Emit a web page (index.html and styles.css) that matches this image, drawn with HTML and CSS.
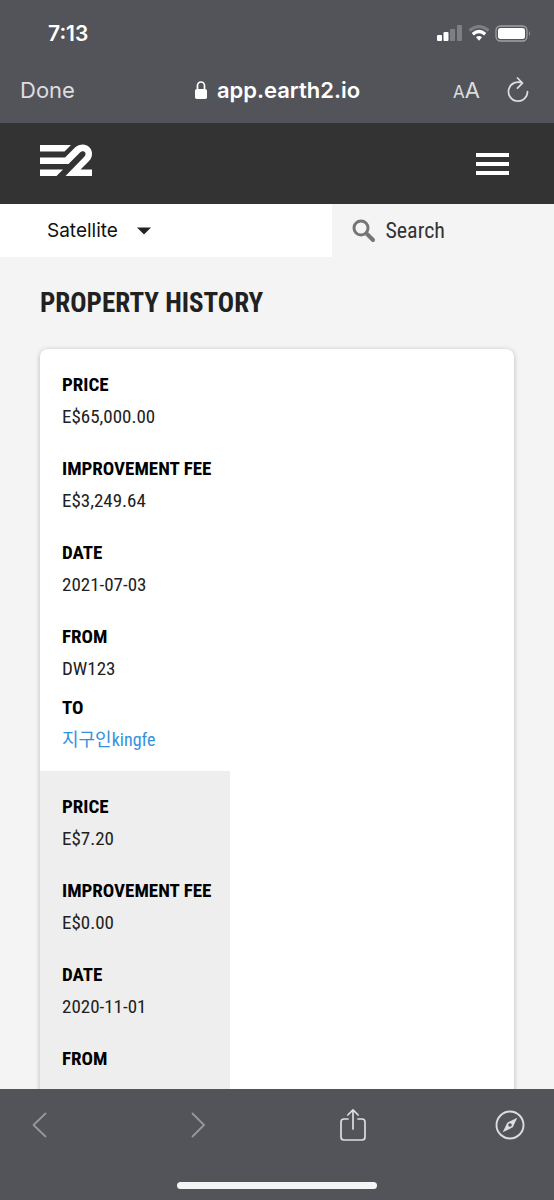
FILE: index.html
```html
<!DOCTYPE html>
<html lang="en">
<head>
<meta charset="utf-8">
<meta name="viewport" content="width=device-width, initial-scale=1">
<title>Property History</title>
<link rel="stylesheet" href="styles.css">
</head>
<body>
<div class="screen">
  <header class="chrome">
    <div class="status">
      <span class="time">7:13</span>
      <span class="indicators">
        <svg width="26" height="18" viewBox="0 0 26 18" fill="#fff" aria-hidden="true"><rect x="0" y="10" width="5" height="6" rx="1"/><rect x="6.500" y="7" width="5" height="9" rx="1"/><g opacity=".25"><rect x="13" y="4" width="5" height="12" rx="1"/><rect x="20" y="0" width="5" height="16" rx="1"/></g></svg>
        <svg width="22" height="18" viewBox="0 0 22 18" fill="none" stroke="#fff" aria-hidden="true"><path d="M1.500 5.500Q11-2.500 20.500 5.500" stroke-width="3" opacity=".25"/><path d="M4.800 9.200Q11 3.800 17.200 9.200" stroke-width="3.200"/><path d="M8 12.200Q11 10 14 12.200L11 15.800Z" fill="#fff" stroke="none"/></svg>
        <svg width="36" height="18" viewBox="0 0 36 18" aria-hidden="true"><rect x="1" y="1" width="31" height="15" rx="4.500" fill="none" stroke="#a1a1a4" stroke-width="1.300"/><rect x="3" y="3" width="27" height="11" rx="2.500" fill="#fff"/><path d="M34 6Q36 8.500 34 11Z" fill="#a1a1a4"/></svg>
      </span>
    </div>
    <div class="address">
      <button class="plain done" type="button">Done</button>
      <div class="site">
        <svg width="14" height="20" viewBox="0 0 14 20" aria-hidden="true"><rect x="1" y="9" width="12" height="10" rx="1.800" fill="#fff"/><path d="M3.500 9V5.500a3.500 3.500 0 0 1 7 0V9" fill="none" stroke="#fff" stroke-width="1.700"/></svg>
        <span>app.earth2.io</span>
      </div>
      <div class="tools">
        <button class="plain textsize" type="button" aria-label="Text size"><small>A</small>A</button>
        <button class="plain" type="button" aria-label="Reload"><svg width="22" height="26" viewBox="0 0 22 26" fill="none" stroke="#dddde0" stroke-width="1.700" stroke-linecap="round" stroke-linejoin="round"><path d="M20.500 14.500A9.500 9.500 0 1 1 15.200 6.100M10.500 1l5 5.200-5 5"/></svg></button>
      </div>
    </div>
  </header>

  <main class="page">
    <nav class="navbar">
      <a class="logo" href="#" aria-label="Earth 2"><svg width="52" height="33" viewBox="0 0 52 33" fill="#fff"><path d="M0 1H31L24.500 7.500H0ZM0 13.500H25L35.500 3Q38 .5 42.500.5C48 .5 52 4.500 52 9.500Q52 14 49 17L40.500 25.500H52V32H25.500L44.500 12.500C47.500 9 43.500 5.500 40 8.500L28.500 20H0ZM0 25.500H23L16.500 32H0Z"/></svg></a>
      <button class="plain" type="button" aria-label="Menu"><svg width="33" height="24" viewBox="0 0 33 24" fill="#fff"><path d="M0 1h33v4H0zM0 10h33v4H0zM0 19h33v4H0z"/></svg></button>
    </nav>
    <div class="filters">
      <div class="map-style">
        <select class="style-select" aria-label="Map style"><option>Satellite</option></select>
        <svg class="caret" width="14" height="8" viewBox="0 0 14 8" aria-hidden="true"><path d="M0 .5h14L7 7.500z" fill="#222"/></svg>
      </div>
      <label class="search">
        <svg width="24" height="24" viewBox="0 0 24 24" fill="none" stroke="#757575" aria-hidden="true"><circle cx="9" cy="9" r="7" stroke-width="3"/><path d="M14.500 14.500l6.500 6.500" stroke-width="4" stroke-linecap="round"/></svg>
        <input class="search-input" type="text" placeholder="Search" aria-label="Search">
      </label>
    </div>

    <section class="history">
      <h1 class="title">PROPERTY HISTORY</h1>
      <div class="card">
        <dl class="record">
          <div class="field"><dt>PRICE</dt><dd>E$65,000.00</dd></div>
          <div class="field"><dt>IMPROVEMENT FEE</dt><dd>E$3,249.64</dd></div>
          <div class="field"><dt>DATE</dt><dd>2021-07-03</dd></div>
          <div class="field from"><dt>FROM</dt><dd>DW123</dd></div>
          <div class="field to"><dt>TO</dt><dd><a class="owner" href="#">지구인kingfe</a></dd></div>
        </dl>
        <dl class="record shaded">
          <div class="field"><dt>PRICE</dt><dd>E$7.20</dd></div>
          <div class="field"><dt>IMPROVEMENT FEE</dt><dd>E$0.00</dd></div>
          <div class="field"><dt>DATE</dt><dd>2020-11-01</dd></div>
          <div class="field from"><dt>FROM</dt></div>
        </dl>
      </div>
    </section>
  </main>

  <footer class="toolbar">
    <div class="actions">
      <button class="plain action" type="button" aria-label="Back"><svg width="16" height="26" viewBox="0 0 16 26" fill="none" stroke="#97979b" stroke-width="1.800" stroke-linecap="round" stroke-linejoin="round"><path d="M13.500 1.500L1.500 13l12 11.500"/></svg></button>
      <button class="plain action" type="button" aria-label="Forward"><svg width="16" height="26" viewBox="0 0 16 26" fill="none" stroke="#97979b" stroke-width="1.800" stroke-linecap="round" stroke-linejoin="round"><path d="M3.500 1.500L15 13 3.500 24.500"/></svg></button>
      <button class="plain action" type="button" aria-label="Share"><svg width="28" height="34" viewBox="0 0 28 34" fill="none" stroke="#dddde0" stroke-width="1.700" stroke-linecap="round" stroke-linejoin="round"><path d="M9 11H5Q2 11 2 14v15q0 3 3 3h18q3 0 3-3V14q0-3-3-3h-4M14 21V2M8.800 7L14 1.800 19.200 7"/></svg></button>
      <button class="plain action" type="button" aria-label="Open in Safari"><svg width="30" height="30" viewBox="0 0 30 30"><circle cx="15" cy="15" r="13.500" fill="none" stroke="#dddde0" stroke-width="1.900"/><path fill="#dddde0" fill-rule="evenodd" d="M22.300 7.700L17.800 17.300 7.700 22.300 12.300 12.700ZM15 13.200a1.800 1.800 0 1 0 0 3.600 1.800 1.800 0 0 0 0-3.600Z"/></svg></button>
    </div>
    <div class="home-bar"></div>
  </footer>
</div>
</body>
</html>
```
FILE: styles.css
```css
* {
  box-sizing: border-box;
}

body {
  margin: 0;
  font-family: "Roboto Condensed", "Liberation Sans Narrow", Roboto, "Noto Sans CJK KR", sans-serif;
  color: #212121;
}

svg {
  display: block;
}

.plain {
  padding: 0;
  border: 0;
  background: none;
  color: #dddde0;
  font: inherit;
}

.screen {
  display: flex;
  flex-direction: column;
  height: 100vh;
  overflow: hidden;
}

.chrome {
  flex: none;
  padding-bottom: 9px;
  background: #535459;
  color: #fff;
  font-family: Inter, sans-serif;
}

.status {
  display: flex;
  align-items: center;
  justify-content: space-between;
  height: 66px;
  padding: 0 23px 0 48px;
}

.time {
  font-size: 21px;
  font-weight: 600;
}

.indicators {
  display: flex;
  gap: 5px;
  padding-top: 2px;
}

.address {
  display: grid;
  grid-template-columns: 1fr auto 1fr;
  align-items: center;
  height: 48px;
  padding: 0 20px;
}

.done {
  justify-self: start;
  font-size: 22px;
}

.site {
  display: flex;
  align-items: center;
  gap: 9px;
  font-size: 22px;
  font-weight: 600;
}

.tools {
  display: flex;
  align-items: center;
  justify-content: flex-end;
  gap: 27px;
  padding-right: 5px;
}

.textsize {
  font-size: 22px;
}

.textsize small {
  font-size: 17px;
}

.page {
  flex: 1;
  min-height: 0;
  overflow: hidden;
  background: #f4f4f4;
}

.navbar {
  display: flex;
  align-items: center;
  justify-content: space-between;
  height: 81px;
  padding: 0 45px 0 40px;
  background: #333;
}

.logo {
  padding-bottom: 6px;
}

.filters {
  display: grid;
  grid-template-columns: minmax(0, 3fr) minmax(0, 2fr);
  height: 53px;
}

.map-style {
  display: flex;
  align-items: center;
  padding-left: 47px;
  background: #fff;
}

.style-select {
  width: 104px;
  margin-right: -14px;
  padding: 0;
  border: 0;
  appearance: none;
  background: none;
  color: #111;
  font: 19px Inter, sans-serif;
}

.caret {
  pointer-events: none;
}

.search {
  display: flex;
  align-items: center;
  gap: 9px;
  padding-left: 20px;
}

.search-input {
  flex: 1;
  min-width: 0;
  padding: 0;
  border: 0;
  background: none;
  color: #333;
  font: inherit;
  font-size: 22px;
}

.search-input::placeholder {
  color: #333;
}

.history {
  padding: 30px 40px 0;
}

.title {
  margin: 0 0 30px;
  font-size: 27px;
  font-weight: 700;
  line-height: 32px;
}

.card {
  overflow: hidden;
  border-radius: 8px;
  background: #fff;
  box-shadow: 0 1px 5px rgba(0, 0, 0, 0.25);
}

.record {
  width: 190px;
  margin: 0;
  padding: 20px 0 15px 22px;
  font-size: 19px;
  line-height: 32px;
  white-space: nowrap;
}

.shaded {
  background: #eee;
}

.field {
  margin-bottom: 20px;
}

.from {
  margin-bottom: 7px;
}

.to {
  margin-bottom: 0;
}

dt {
  color: #000;
  font-weight: 700;
}

dd {
  height: 32px;
  margin: 0;
}

.shaded .from {
  padding-bottom: 40px;
}

.owner {
  color: #3490dc;
  font-size: 18px;
  text-decoration: none;
}

.toolbar {
  flex: none;
  display: flex;
  flex-direction: column;
  align-items: center;
  justify-content: space-between;
  height: 111px;
  padding: 19px 0 11px;
  background: #535459;
}

.actions {
  display: flex;
  align-items: center;
  justify-content: space-between;
  width: 100%;
  padding: 0 28px 0 24px;
}

.action {
  display: flex;
  justify-content: center;
  width: 32px;
}

.home-bar {
  width: 36%;
  height: 7px;
  border-radius: 4px;
  background: #f4f4f5;
}
```
